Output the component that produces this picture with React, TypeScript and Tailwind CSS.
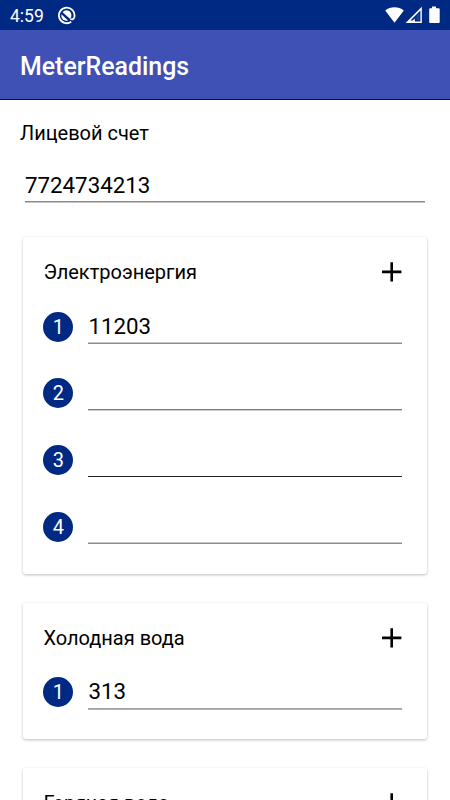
import React from 'react';

type Row = { id: number; value: string; line: string };

const electricity: Row[] = [
  { id: 1, value: '11203', line: '-mt-px h-[2px] border-t border-[#c4c4c4] bg-[#8e8e8e]' },
  { id: 2, value: '', line: 'h-[2px] border-t border-[#7a7a7a] bg-[#d0d0d0]' },
  { id: 3, value: '', line: 'h-px bg-[#222222]' },
  { id: 4, value: '', line: '-mt-px h-[2px] border-t border-[#c4c4c4] bg-[#8e8e8e]' },
];

const coldWater: Row[] = [
  { id: 1, value: '313', line: 'h-[2px] border-t border-[#a4a4a4] bg-[#b0b0b0]' },
];

const PlusIcon: React.FC = () => (
  <svg className="w-5 h-5" viewBox="0 0 20 20" fill="none" stroke="#000" strokeWidth="2.6">
    <path d="M0 9.9H19.4M9.7 0.2V19.5" />
  </svg>
);

const StatusBar: React.FC = () => (
  <div className="h-[30px] bg-[#002984] flex items-center text-white">
    <span className="ml-[10px] w-[47px] text-[17.5px] leading-[30px] pt-[2px]">4:59</span>
    <svg className="w-[19px] h-[19px]" viewBox="0 0 19 19" fill="none">
      <path d="M14.2 15.8A7.8 7.8 0 1 1 17.4 10.8C17 13.2 15.2 13.8 13.4 13" stroke="#fff" strokeWidth="1.8" />
      <path d="M5.6 6.2A5 5 0 0 1 14.4 8.8C14.5 10.6 14.1 11.8 13.2 13Z" fill="#fff" />
      <path d="M4.5 8.2A5 5 0 0 0 11 14.4Z" fill="#fff" />
    </svg>
    <svg className="w-[60px] h-[18px] ml-auto mr-[8px]" viewBox="0 0 60 18" fill="none">
      <path d="M3.2 4.6C8.4 0.2 16.6 0.2 21.8 4.6L12.5 16.8Z" fill="#fff" />
      <path d="M23.6 17L39.8 0.8V17Z" fill="#fff" />
      <path d="M28.4 14.6L38.4 4.6V15.4H32.8V12.6L30.8 14.6Z" fill="#002984" />
      <path d="M34.6 9.8L37.2 7.2V14.4H34.6Z" fill="#1f4296" />
      <path d="M50 0.6h4v1.6h2.7a1 1 0 0 1 1 1V16a1 1 0 0 1-1 1h-8.5a1 1 0 0 1-1-1V3.2a1 1 0 0 1 1-1H50z" fill="#fff" />
    </svg>
  </div>
);

const MeterCard: React.FC<{ title: string; rows: Row[] }> = ({ title, rows }) => (
  <section className="mx-[23px] mb-[29px] pt-5 pb-5 pl-5 pr-[25px] rounded-[3px] bg-white shadow-[0_1px_3px_rgba(0,0,0,0.26)]">
    <div className="h-[30px] flex items-center justify-between">
      <h2 className="text-[20px] pl-[0.4px] leading-[30px]">{title}</h2>
      <PlusIcon />
    </div>
    {rows.map((row) => (
      <div key={row.id} className="h-[66.7px] pt-[24.5px] flex">
        <span className="ml-[0.3px] w-[30px] h-[30px] rounded-full bg-[#002984] text-white text-[20px] leading-[31px] text-center">
          {row.id}
        </span>
        <div className="ml-[14.7px] flex-1">
          <div className="h-[31px] pl-[0.5px] text-[22.3px] leading-[28px]">{row.value}</div>
          <div className={row.line} />
        </div>
      </div>
    ))}
  </section>
);

const App: React.FC = () => {
  return (
    <div className="h-[800px] overflow-hidden bg-white text-black font-['Roboto',sans-serif]">
      <StatusBar />
      <header className="h-[70px] bg-[#3f51b5] border-b border-[#0000a0] flex items-center pl-5 pt-[5px]">
        <h1 className="text-[24.9px] font-medium text-white">MeterReadings</h1>
      </header>
      <div className="pt-[18px] pl-5 pr-[25px] mb-[34px]">
        <label className="block text-[20px] leading-[30px]">Лицевой счет</label>
        <div className="ml-[5px] mt-[22px] h-[31px] text-[22.3px] leading-[30px]">7724734213</div>
        <div className="ml-[5px] h-[2px] border-t border-[#8a8a8a] bg-[#c4c4c4]" />
      </div>
      <MeterCard title="Электроэнергия" rows={electricity} />
      <MeterCard title="Холодная вода" rows={coldWater} />
      <MeterCard title="Горячая вода" rows={[]} />
    </div>
  );
};

export default App;
